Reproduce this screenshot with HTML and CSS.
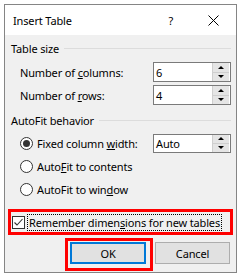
FILE: index.html
```html
<!DOCTYPE html>
<html>
<head>
<meta charset="utf-8">
<link rel="stylesheet" href="styles.css">
</head>
<body>
<div class="dialog">
  <div class="titlebar">
    <span class="title">Insert Table</span>
    <span class="help">?</span>
    <span class="close"><svg width="11" height="11" viewBox="0 0 11 11"><path d="M0.5 0.5 L10.5 10.5 M10.5 0.5 L0.5 10.5" stroke="#000" stroke-width="1" fill="none"/></svg></span>
  </div>
  <div class="content">
    <div class="group-head g1"><span>Table size</span><span class="rule"></span></div>
    <div class="field first">
      <span class="label">Number of <u>c</u>olumns:</span>
      <div class="spin"><span class="val">6</span><div class="spin-btns"><span class="spin-btn"><i class="arr-up"></i></span><span class="spin-btn"><i class="arr-down"></i></span></div></div>
    </div>
    <div class="field">
      <span class="label">Number of <u>r</u>ows:</span>
      <div class="spin"><span class="val">4</span><div class="spin-btns"><span class="spin-btn"><i class="arr-up"></i></span><span class="spin-btn"><i class="arr-down"></i></span></div></div>
    </div>
    <div class="group-head g2"><span>AutoFit behavior</span><span class="rule"></span></div>
    <div class="opt first">
      <span class="radio"><span class="dot"></span></span>
      <span class="label">Fixed column <u>w</u>idth:</span>
      <div class="spin"><span class="val">Auto</span><div class="spin-btns"><span class="spin-btn"><i class="arr-up"></i></span><span class="spin-btn"><i class="arr-down"></i></span></div></div>
    </div>
    <div class="opt">
      <span class="radio"></span>
      <span class="label">Auto<u>F</u>it to contents</span>
    </div>
    <div class="opt">
      <span class="radio"></span>
      <span class="label">AutoFit to win<u>d</u>ow</span>
    </div>
    <div class="remember">
      <span class="check"><svg width="11" height="11" viewBox="0 0 11 11"><path d="M1.5 5.5 L4 8 L9.5 2" stroke="#333" stroke-width="1.1" fill="none"/></svg></span>
      <span class="focus">Remember dimen<u>s</u>ions for new tables</span>
    </div>
    <div class="buttons">
      <div class="okwrap"><span class="btn ok">OK</span></div>
      <span class="btn cancel">Cancel</span>
    </div>
  </div>
</div>
</body>
</html>
```
FILE: styles.css
```css
* { box-sizing: border-box; }
html, body { margin: 0; padding: 0; background: #fff; }
body {
  font-family: "Noto Sans", "Open Sans", sans-serif;
  font-size: 11px;
  letter-spacing: -0.15px;
  color: #000;
  padding: 4px;
}
u { text-underline-offset: 1px; }
.dialog {
  width: 233px;
  height: 269px;
  border: 1px solid #858585;
  display: flex;
  flex-direction: column;
  background: #f0f0f0;
}
.titlebar {
  height: 30px;
  flex: none;
  background: #fff;
  display: flex;
  align-items: center;
  padding-left: 8px;
}
.title { flex: 1; }
.help { margin-right: 18px; }
.close { width: 45px; display: flex; justify-content: center; }
.close svg { display: block; }
.content {
  flex: 1;
  display: flex;
  flex-direction: column;
  padding: 0 5px 0 6px;
}
.group-head { display: flex; align-items: center; height: 14px; }
.g1 { margin-top: 6px; }
.g2 { margin-top: 8px; }
.rule { flex: 1; height: 1px; background: #dcdcdc; margin-left: 5px; }
.field, .opt {
  display: flex;
  align-items: center;
  height: 20px;
  padding-left: 9px;
}
.field.first { margin-top: 7px; }
.field + .field { margin-top: 3px; }
.opt.first { margin-top: 6px; }
.opt + .opt { margin-top: 3px; }
.label { flex: 1; }
.spin {
  width: 78px;
  height: 20px;
  border: 1px solid #7a7a7a;
  background: #fff;
  display: flex;
  align-items: center;
  padding: 0 1px 0 2px;
}
.opt .spin { height: 19px; }
.val { flex: 1; }
.spin-btns {
  width: 17px;
  align-self: stretch;
  display: flex;
  flex-direction: column;
  padding: 0;
}
.spin-btn {
  flex: 1;
  background: #e5e5e5;
  border-left: 1px solid #cfcfcf;
  display: flex;
  align-items: center;
  justify-content: center;
}
.spin-btn + .spin-btn { border-top: 1px solid #cfcfcf; }
.arr-up, .arr-down {
  width: 0; height: 0;
  border-left: 3px solid transparent;
  border-right: 3px solid transparent;
}
.arr-up { border-bottom: 3px solid #000; }
.arr-down { border-top: 3px solid #000; }
.radio {
  width: 13px; height: 13px;
  border: 1px solid #333;
  border-radius: 50%;
  background: #fff;
  display: flex;
  align-items: center;
  justify-content: center;
  margin-right: 4px;
  flex: none;
}
.dot { width: 7px; height: 7px; border-radius: 50%; background: #333; }
.remember {
  margin: 10px -2px 0 -3px;
  height: 26px;
  border: 3px solid #f00;
  display: flex;
  align-items: center;
  padding-left: 1px;
}
.check {
  width: 13px; height: 13px;
  border: 1px solid #333;
  background: #fff;
  display: flex;
  align-items: center;
  justify-content: center;
  margin-right: 2px;
  flex: none;
}
.check svg { display: block; }
.focus {
  border: 1px dotted #000;
  height: 17px;
  padding: 0 1px;
  display: flex;
  align-items: center;
}
.buttons {
  margin-top: 3px;
  display: flex;
  justify-content: flex-end;
  align-items: flex-start;
}
.okwrap {
  width: 88px;
  height: 33px;
  border: 3px solid #f00;
  padding: 1px 0 0 2px;
}
.btn {
  display: flex;
  align-items: center;
  justify-content: center;
  height: 22px;
  background: #e1e1e1;
}
.ok { width: 76px; border: 2px solid #0078d7; }
.cancel {
  width: 75px;
  border: 1px solid #adadad;
  margin: 4px 1px 0 2px;
}
```
